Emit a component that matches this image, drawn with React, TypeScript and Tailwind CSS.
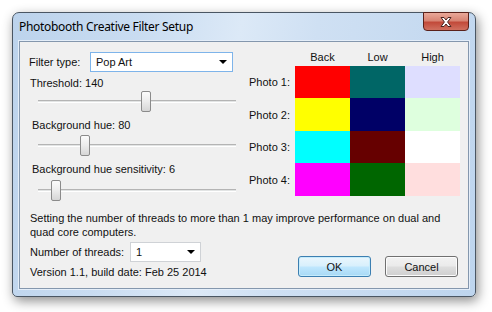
import React from "react";

const font = { fontFamily: '"Liberation Sans", Arial, sans-serif' };

function Arrow() {
  return (
    <svg width="8" height="4" viewBox="0 0 8 4" className="shrink-0">
      <path d="M0 0H8L4 4Z" fill="#000" />
    </svg>
  );
}

function Combo({ value, width, focused }: { value: string; width: string; focused?: boolean }) {
  return (
    <div
      className={`flex h-[20px] items-center justify-between bg-white pl-[5px] pr-[5px] border ${width} ${
        focused ? "border-[#7eb4ea]" : "border-[#cfd2d6]"
      }`}
    >
      <span className="leading-[14px]">{value}</span>
      <Arrow />
    </div>
  );
}

// thumb offset in px from the left end of the track
function Slider({ offset }: { offset: number }) {
  return (
    <div className="relative ml-[9px] h-[21px] w-[198px]">
      <div className="absolute left-0 right-0 top-[9px] h-[3px] border-t border-t-[#b4b4b4] border-b border-b-white bg-[#e2e4e4]" />
      <div
        className="absolute top-0 h-[21px] w-[10px] rounded-[2px] border border-[#8b8b8b] bg-gradient-to-b from-[#fbfbfb] via-[#ececec] to-[#d6d6d6]"
        style={{ left: offset }}
      />
    </div>
  );
}

const rows = [
  { label: "Photo 1:", h: "h-[32px]", c: ["bg-[#ff0000]", "bg-[#006666]", "bg-[#dedeff]"] },
  { label: "Photo 2:", h: "h-[33px]", c: ["bg-[#ffff00]", "bg-[#000066]", "bg-[#deffde]"] },
  { label: "Photo 3:", h: "h-[32px]", c: ["bg-[#00ffff]", "bg-[#660000]", "bg-[#ffffff]"] },
  { label: "Photo 4:", h: "h-[33px]", c: ["bg-[#ff00ff]", "bg-[#006600]", "bg-[#ffdede]"] },
];

export default function App() {
  return (
    <div className="h-[312px] w-[492px] overflow-hidden bg-white pl-[12px] pt-[12px] text-[11px] text-[#111] whitespace-nowrap" style={font}>
      {/* Window frame */}
      <div className="relative flex h-[285px] w-[464px] flex-col rounded-t-[7px] rounded-b-[5px] border border-[#4a5663] bg-[linear-gradient(100deg,#bcd3ec_0%,#c9dcf1_25%,#dce9f7_45%,#cfe0f3_60%,#bed5ee_100%)] shadow-[2px_4px_12px_rgba(0,0,0,0.45)]">
        {/* Title bar */}
        <div className="flex h-[28px] items-center pl-[6px]">
          <span
            className="text-[12px] leading-[14px] tracking-[-0.3px] text-black"
            style={{ fontFamily: '"Noto Sans", "Open Sans", sans-serif' }}
          >
            Photobooth Creative Filter Setup
          </span>
        </div>

        {/* Close button */}
        <div className="absolute right-[6px] top-[-1px] flex h-[19px] w-[46px] items-center justify-center rounded-b-[4px] border border-[#5a211a] bg-[linear-gradient(to_bottom,#e9a899_0%,#d88574_45%,#c24a3a_55%,#d0705f_100%)]">
          <svg width="14" height="12" viewBox="0 0 14 12">
            <path
              d="M2 1.5L5 1.5L7 4L9 1.5L12 1.5L8.6 6L12 10.5L9 10.5L7 8L5 10.5L2 10.5L5.4 6Z"
              fill="#fff"
              stroke="#4a2420"
              strokeWidth="1"
              strokeLinejoin="round"
            />
          </svg>
        </div>

        {/* Client area */}
        <div className="mx-[6px] flex h-[248px] flex-col border border-[#8497ad] bg-[#f0f0f0] pl-[9px] pr-[10px] pt-[10px] shadow-[0_0_0_1px_#e4eef9]">
          <div className="flex">
            {/* Left controls */}
            <div className="flex w-[207px] flex-col">
              <div className="flex h-[20px] items-center">
                <span className="w-[61px] leading-[14px]">Filter type:</span>
                <Combo value="Pop Art" width="w-[143px]" focused />
              </div>
              <div className="mt-[4px] pl-[1px] leading-[14px]">Threshold: 140</div>
              <div className="mt-[1px]">
                <Slider offset={103} />
              </div>
              <div className="mt-[6px] pl-[3px] leading-[14px]">Background hue: 80</div>
              <div className="mt-[3px]">
                <Slider offset={42} />
              </div>
              <div className="mt-[6px] pl-[3px] leading-[14px]">Background hue sensitivity: 6</div>
              <div className="mt-[4px]">
                <Slider offset={13} />
              </div>
            </div>

            {/* Colour grid */}
            <div className="ml-[13px] mt-[-2px] flex w-[211px] flex-col">
              <div className="flex h-[16px]">
                <div className="w-[46px]" />
                <div className="w-[55px] text-center leading-[14px]">Back</div>
                <div className="w-[55px] text-center leading-[14px]">Low</div>
                <div className="w-[55px] text-center leading-[14px]">High</div>
              </div>
              {rows.map((r) => (
                <div key={r.label} className={`flex ${r.h}`}>
                  <div className="flex w-[46px] items-center justify-end pr-[5px] leading-[14px]">{r.label}</div>
                  {r.c.map((c, i) => (
                    <div key={i} className={`w-[55px] ${c}`} />
                  ))}
                </div>
              ))}
            </div>
          </div>

          {/* Bottom section */}
          <div className="mt-[10px] pl-[1px] leading-[14px]">
            Setting the number of threads to more than 1 may improve performance on dual and
            <br />
            quad core computers.
          </div>
          <div className="flex items-end justify-between">
            <div className="flex flex-col pl-[1px]">
              <div className="mt-[3px] flex items-center">
                <span className="w-[100px] leading-[14px]">Number of threads:</span>
                <Combo value="1" width="w-[71px]" />
              </div>
              <div className="mt-[3px] leading-[14px]">Version 1.1, build date: Feb 25 2014</div>
            </div>
            <div className="mb-[2px] flex gap-[14px]">
              <button className="h-[21px] w-[73px] rounded-[3px] border border-[#3c7fb1] bg-[linear-gradient(to_bottom,#eaf6fd_0%,#d9f0fc_45%,#bee6fd_55%,#a7d9f5_100%)] leading-[14px] shadow-[inset_0_0_0_1px_#c6ecfc]">
                OK
              </button>
              <button className="h-[21px] w-[73px] rounded-[3px] border border-[#707070] bg-[linear-gradient(to_bottom,#f2f2f2_0%,#ebebeb_45%,#dddddd_55%,#cfcfcf_100%)] leading-[14px] shadow-[inset_0_0_0_1px_#fcfcfc]">
                Cancel
              </button>
            </div>
          </div>
        </div>
      </div>
    </div>
  );
}
